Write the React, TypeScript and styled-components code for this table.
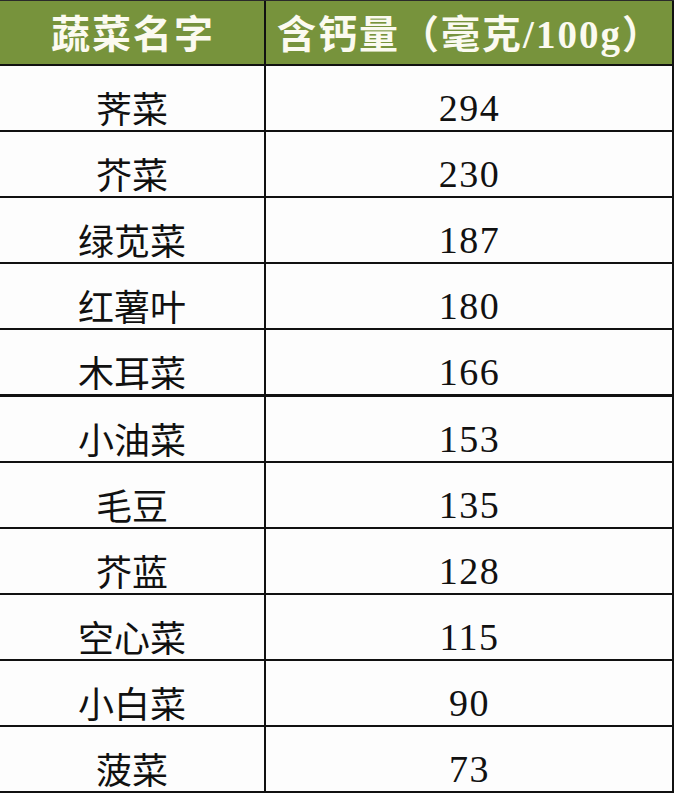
import React from "react";
import styled, { createGlobalStyle } from "styled-components";

const GlobalStyle = createGlobalStyle`
  html, body {
    margin: 0;
    padding: 0;
    background: #ffffff;
  }
`;

const Table = styled.div`
  width: 674px;
  border-top: 1px solid #2a2a2a;
  font-family: "Liberation Serif", "Noto Sans CJK SC", serif;
`;

const Row = styled.div<{ $thick?: boolean; $head?: boolean }>`
  display: grid;
  grid-template-columns: 266px 408px;
  height: ${(p) => (p.$head ? 65 : p.$thick ? 67 : 66)}px;
  box-sizing: border-box;
  border-bottom: ${(p) => (p.$thick ? 3 : 2)}px solid #111;
  background: ${(p) => (p.$head ? "#77933c" : "#fdfdfd")};
`;

const Cell = styled.div<{ $head?: boolean; $num?: boolean }>`
  display: flex;
  justify-content: center;
  align-items: ${(p) => (p.$head ? "center" : "flex-end")};
  box-sizing: border-box;
  border-right: 2px solid #111;
  padding-top: ${(p) => (p.$head ? 4 : 0)}px;
  padding-bottom: ${(p) => (p.$head ? 0 : p.$num ? 3 : 1)}px;
  padding-left: ${(p) => (p.$head ? 2 : p.$num ? 1 : 0)}px;
  color: ${(p) => (p.$head ? "#fbfaf0" : "#111")};
  font-weight: ${(p) => (p.$head ? 700 : 400)};
  font-size: ${(p) => (p.$head ? 39 : p.$num ? 38 : 36)}px;
  letter-spacing: ${(p) => (p.$head ? 2 : p.$num ? 1.5 : 0)}px;
  line-height: 1;
  font-family: ${(p) =>
    p.$num
      ? `"Liberation Serif", serif`
      : `"Liberation Serif", "Noto Sans CJK SC", sans-serif`};
  white-space: nowrap;
`;

const rows: [string, number][] = [
  ["荠菜", 294],
  ["芥菜", 230],
  ["绿苋菜", 187],
  ["红薯叶", 180],
  ["木耳菜", 166],
  ["小油菜", 153],
  ["毛豆", 135],
  ["芥蓝", 128],
  ["空心菜", 115],
  ["小白菜", 90],
  ["菠菜", 73],
];

export default function App() {
  return (
    <>
      <GlobalStyle />
      <Table>
        <Row $head>
          <Cell $head>蔬菜名字</Cell>
          <Cell $head>含钙量（毫克/100g）</Cell>
        </Row>
        {rows.map(([name, value], i) => (
          <Row key={name} $thick={i === 4}>
            <Cell>{name}</Cell>
            <Cell $num>{value}</Cell>
          </Row>
        ))}
      </Table>
    </>
  );
}
